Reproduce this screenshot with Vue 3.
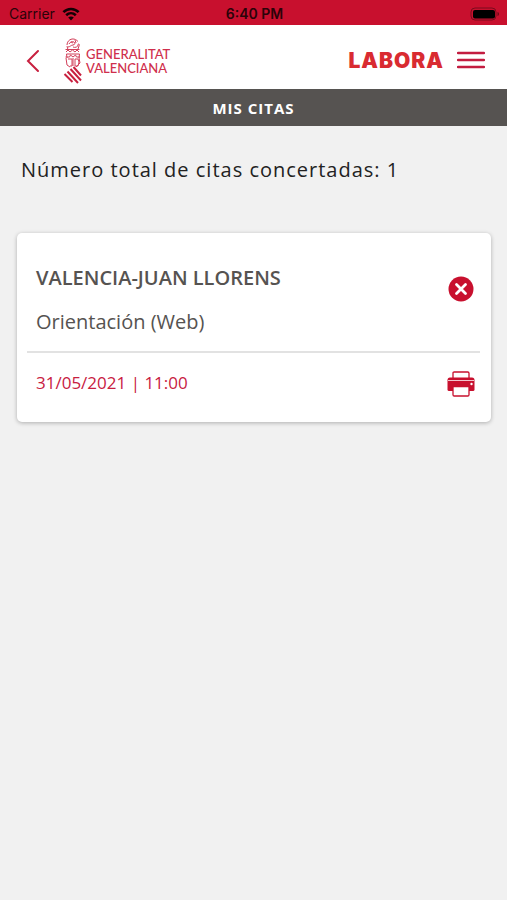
<script setup>
const appointments = [
  { id: 1, office: 'VALENCIA-JUAN LLORENS', service: 'Orientación (Web)', date: '31/05/2021', time: '11:00' },
]
</script>

<template>
  <div class="screen">
    <div class="status">
      <div class="carrier">
        <span>Carrier</span>
        <svg class="wifi" viewBox="0 0 18 14" aria-hidden="true">
          <path d="M1.4 5.2C5.7.9 12.3.9 16.6 5.2" />
          <path d="M4.2 8.2c2.8-2.6 6.8-2.6 9.6 0" />
          <path class="dot" d="M9 13.4 6.2 10.6c1.6-1.4 4-1.4 5.6 0z" />
        </svg>
      </div>
      <span class="clock">6:40 PM</span>
      <svg class="battery" viewBox="0 0 30 14" aria-hidden="true">
        <rect class="shell" x="1" y="1" width="25" height="12" rx="4" />
        <rect x="3" y="3" width="22" height="8.5" rx="2" />
        <path d="M27.5 5c2 .6 2 3.4 0 4z" opacity=".45" />
      </svg>
    </div>

    <header class="header">
      <button class="icon-button back" type="button" aria-label="Volver">
        <svg viewBox="0 0 14 24" aria-hidden="true"><path d="M12 2 2 12l10 10" /></svg>
      </button>
      <a class="brand" href="#" aria-label="Generalitat Valenciana">
        <svg class="crest" viewBox="0 0 20 46" aria-hidden="true">
          <path d="M4 7c0-3 2-5.500 5-6 3-.3 4.500 1 6 2.500M5 9c2 0 3-2 5-2 2-.2 2.500-2 1-3-2-1-4 0-5 2M10 9c2 1 5 0 5-2s2-1 1 1l-1 3M4 8l1 4M8 4l2 1M12 2l1 3" />
          <path d="M2.500 11.500h14M3 14l2-2 2 2 2.500-2 2.500 2 2-2 2 2M3.500 16h13M3.500 16l.5 4M16.500 16l-.5 4M2.500 19h4l1-2 2.500 2 2.500-2 1 2h3.500" />
          <path d="M3 20l1 7 3 2M16 20l1 5-4 4M5 21h4v7H7M10 20v8M12 21h3l1 3-1 4h-3z" />
          <g class="stripes">
            <path d="M10.500 29 18 37.500M7.500 31 18 42.500M4.500 33.500 15 45M1.500 36 9.500 44" />
          </g>
        </svg>
        <span class="brand-name"><span>GENERALITAT</span><span>VALENCIANA</span></span>
      </a>
      <span class="labora">LABORA</span>
      <button class="icon-button menu" type="button" aria-label="Menú">
        <svg viewBox="0 0 28 18" aria-hidden="true"><path d="M1 2h26M1 9h26M1 16h26" /></svg>
      </button>
    </header>

    <h1 class="title">MIS CITAS</h1>

    <main class="content">
      <p class="total">Número total de citas concertadas: {{ appointments.length }}</p>

      <article v-for="item in appointments" :key="item.id" class="card">
        <div class="row main-row">
          <div>
            <h2 class="office">{{ item.office }}</h2>
            <p class="service">{{ item.service }}</p>
          </div>
          <button class="icon-button cancel" type="button" aria-label="Anular cita">
            <svg viewBox="0 0 26 26" aria-hidden="true">
              <circle cx="13" cy="13" r="12.500" />
              <path d="m8.500 8.500 9 9m0-9-9 9" />
            </svg>
          </button>
        </div>
        <div class="row date-row">
          <p class="date">{{ item.date }} | {{ item.time }}</p>
          <button class="icon-button print" type="button" aria-label="Imprimir cita">
            <svg viewBox="0 0 28 26" aria-hidden="true">
              <path class="sheet" d="M6 7V2.200Q6 1 7.200 1h13.600Q22 1 22 2.200V7" />
              <path class="body" d="M3 6.500h22q2.500 0 2.500 2.500V18.500q0 1.500-1.500 1.500H2Q.5 20 .5 18.500V9Q.5 6.500 3 6.500z" />
              <path class="slot" d="M1 9.500h26" />
              <circle class="light" cx="24.500" cy="13" r="1.200" />
              <path class="sheet" d="M6 15.500h16v8.300q0 1.200-1.200 1.200H7.200Q6 25 6 23.800z" />
            </svg>
          </button>
        </div>
      </article>
    </main>
  </div>
</template>

<style>
body {
  margin: 0;
  background: #f1f1f1;
}
</style>

<style scoped>
.screen {
  min-height: 100vh;
  background: #f1f1f1;
  font-family: "Open Sans", sans-serif;
  color: #565351;
}

h1, h2, p {
  margin: 0;
}

svg {
  display: block;
}

.status {
  display: grid;
  grid-template-columns: 1fr auto 1fr;
  align-items: center;
  height: 25px;
  padding: 2px 7px 0 9px;
  box-sizing: border-box;
  background: #c8102e;
  color: #2b0309;
  font: 14px/23px Inter, sans-serif;
}

.carrier {
  display: flex;
  align-items: center;
  gap: 7px;
}

.wifi {
  width: 18px;
  height: 14px;
  fill: none;
  stroke: #120104;
  stroke-width: 2.6;
}

.wifi .dot {
  fill: #120104;
  stroke: none;
}

.clock {
  font-weight: 600;
}

.battery {
  justify-self: end;
  width: 30px;
  height: 14px;
  fill: #000;
}

.battery .shell {
  fill: none;
  stroke: #7a0b1d;
}

.header {
  display: flex;
  align-items: center;
  height: 64px;
  padding: 0 21px 0 18px;
  box-sizing: border-box;
  background: #fff;
}

.icon-button {
  display: block;
  flex: none;
  padding: 0;
  border: 0;
  background: none;
  cursor: pointer;
}

.back {
  padding: 8px;
  margin-top: 8px;
}

.back svg {
  width: 14px;
  height: 24px;
  fill: none;
  stroke: #c8203f;
  stroke-width: 2;
  stroke-linecap: round;
}

.brand {
  display: flex;
  align-items: center;
  gap: 3px;
  margin: 8px auto 0 15px;
  color: #cf2f4c;
  text-decoration: none;
}

.crest {
  width: 20px;
  height: 46px;
  fill: none;
  stroke: #d2405a;
  stroke-width: 1;
}

.stripes {
  stroke: #c8203f;
  stroke-width: 2;
}

.brand-name {
  display: flex;
  flex-direction: column;
  font: 500 13px/14px Lato, sans-serif;
}

.labora {
  margin-top: 8px;
  color: #d92b31;
  font: 900 21px/24px Inter, sans-serif;
  letter-spacing: 1px;
}

.menu {
  margin: 6px 0 0 12px;
  padding: 4px 1px;
}

.menu svg {
  width: 28px;
  height: 18px;
  fill: none;
  stroke: #c31c40;
  stroke-width: 2.3;
  stroke-linecap: round;
}

.title {
  height: 37px;
  background: #565351;
  color: #fff;
  font-size: 15px;
  line-height: 38px;
  font-weight: 700;
  letter-spacing: 1px;
  text-align: center;
}

.content {
  padding: 28px 16px 28px 17px;
}

.total {
  padding-left: 4px;
  color: #222;
  font-size: 20px;
  line-height: 32px;
  letter-spacing: 1px;
}

.card {
  margin-top: 47px;
  padding: 24px 11px 0 10px;
  border-radius: 5px;
  background: #fff;
  box-shadow: 0 1px 4px rgba(0, 0, 0, 0.28);
}

.row {
  display: flex;
  justify-content: space-between;
  align-items: flex-start;
  padding: 0 5px 0 9px;
}

.main-row {
  height: 94px;
  border-bottom: 2px solid #e2e2e2;
}

.office {
  font-size: 20px;
  line-height: 42px;
  font-weight: 600;
}

.service {
  font-size: 20px;
  line-height: 46px;
}

.cancel {
  margin: 19px 1px 0 0;
}

.cancel svg {
  width: 26px;
  height: 26px;
  fill: #c8102e;
}

.cancel path {
  stroke: #fff;
  stroke-width: 2.8;
  stroke-linecap: round;
}

.date-row {
  height: 69px;
}

.date {
  color: #c8203f;
  font-size: 17px;
  line-height: 60px;
}

.print {
  margin-top: 18px;
}

.print svg {
  width: 28px;
  height: 26px;
}

.print .body {
  fill: #c8102e;
}

.print .sheet {
  fill: #fff;
  stroke: #c8102e;
  stroke-width: 1.3;
}

.print .slot {
  stroke: #f3c3cc;
  stroke-width: 1;
}

.print .light {
  fill: #fff;
}
</style>
